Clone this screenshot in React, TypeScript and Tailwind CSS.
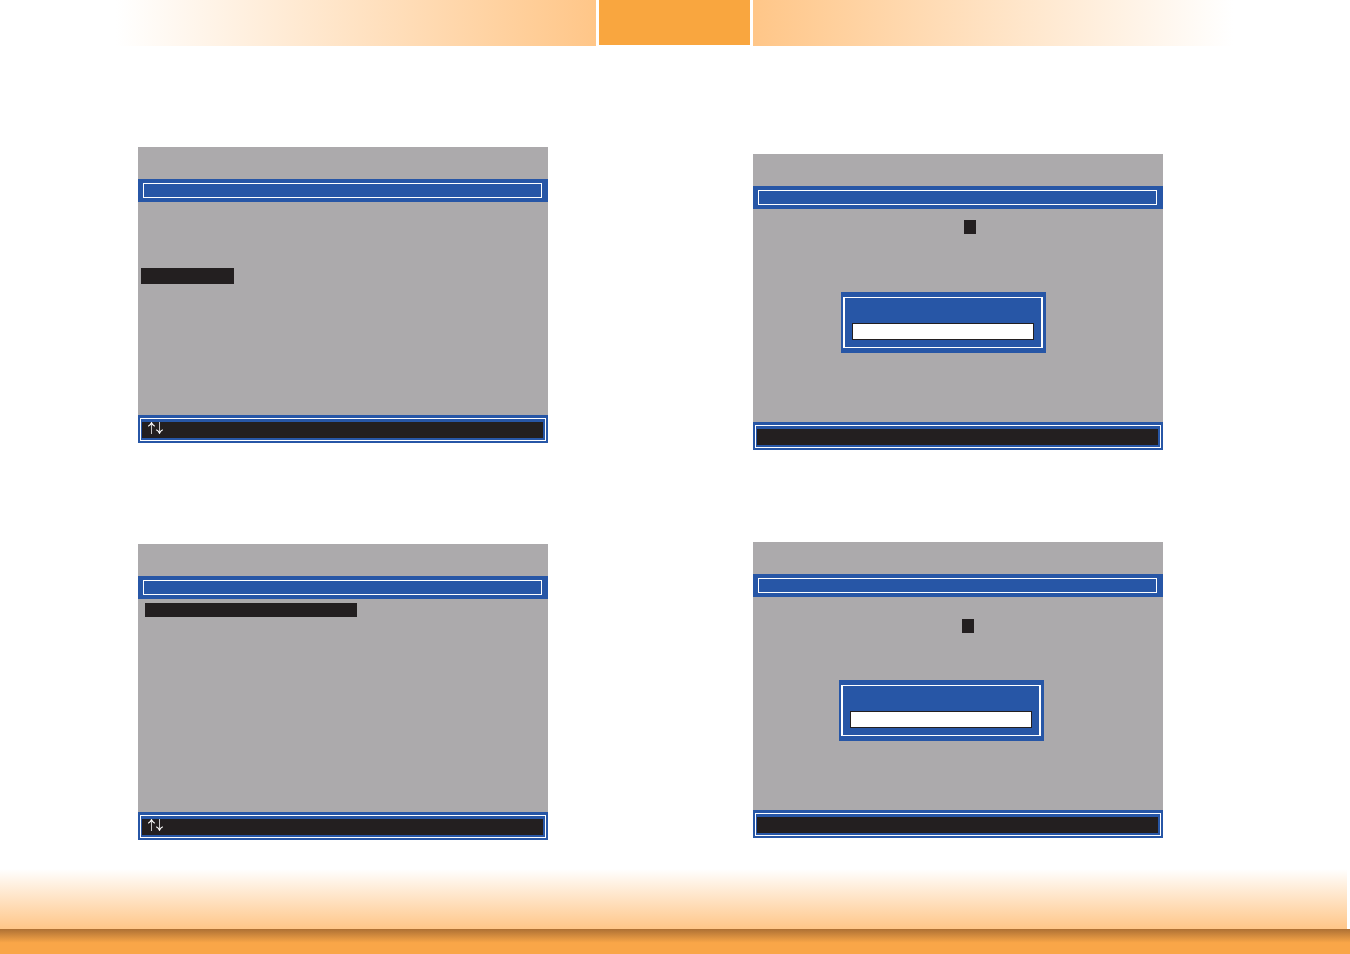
import type { ReactNode } from "react";

function ArrowKeys() {
  return (
    <svg
      aria-label="Up and down arrow keys"
      className="h-3 w-4"
      fill="none"
      role="img"
      stroke="white"
      viewBox="0 0 16 12"
    >
      <path d="M4.5 1v11M12.5 0v11" strokeWidth="1" opacity="0.75" />
      <path d="M1.2 4.2Q3.6 3.2 4.5 0.8Q5.4 3.2 7.8 4.2" strokeWidth="1.1" />
      <path d="M9.2 7.8Q11.6 8.8 12.5 11.2Q13.4 8.8 15.8 7.8" strokeWidth="1.1" />
    </svg>
  );
}

function Screen({ hint, children }: { hint?: ReactNode; children: ReactNode }) {
  return (
    <section className="bg-[#acaaac]">
      <div className="h-8" />
      <div className="bg-[#2756a6] py-1 pl-[5px] pr-1.5">
        <div className="h-[15px] border border-white" />
      </div>
      <div className="h-[213px]">{children}</div>
      <footer className="bg-[#2756a6] px-0.5 pb-0.5 pt-[3px]">
        <div className="border border-white pb-0.5 pl-px pr-0.5 pt-[3px]">
          <div className="flex h-4 items-start bg-[#231f20] pl-[5px]">{hint}</div>
        </div>
      </footer>
    </section>
  );
}

function PasswordPrompt({ label }: { label: string }) {
  return (
    <div className="w-[205px] bg-[#2756a6] py-[5px] pl-0.5 pr-[3px]">
      <div className="border-x-2 border-y border-white px-[7px] pb-[7px] pt-[25px]">
        <input
          aria-label={label}
          className="block h-[17px] w-full border border-[#231f20] bg-white px-1 text-xs text-[#231f20] outline-none"
          type="text"
        />
      </div>
    </div>
  );
}

function PageHeader() {
  return (
    <header className="flex h-[46px] gap-[3px] pl-[116px] pr-[117px]">
      <div className="flex-1 bg-linear-to-r/srgb from-white to-[#ffc688]" />
      <div className="h-[45px] w-[151px] bg-[#f9a63f]" />
      <div className="flex-1 bg-linear-to-l/srgb from-white to-[#ffc688]" />
    </header>
  );
}

function PageFooter() {
  return (
    <footer className="mt-auto">
      <div className="mr-[3px] h-[60px] bg-linear-to-t/srgb from-[#ffc688] to-white" />
      <div className="h-[25px] bg-linear-to-b/srgb from-[#ad7034] via-[#f9a648] via-55% to-[#f9a648]" />
    </footer>
  );
}

export default function App() {
  return (
    <div className="flex min-h-screen flex-col bg-white">
      <PageHeader />

      <main className="flex gap-[205px] pl-[138px] pr-[187px]">
        <div className="flex flex-1 flex-col gap-[101px] pt-[101px]">
          <Screen hint={<ArrowKeys />}>
            <div className="pl-[3px] pt-[66px]">
              <button
                aria-label="Selected menu entry"
                className="block h-4 w-[93px] bg-[#231f20]"
                type="button"
              />
            </div>
          </Screen>
          <Screen hint={<ArrowKeys />}>
            <div className="pl-[7px] pt-1">
              <button
                aria-label="Selected option"
                className="block h-3.5 w-[212px] bg-[#231f20]"
                type="button"
              />
            </div>
          </Screen>
        </div>

        <div className="flex flex-1 flex-col gap-[92px] pt-[108px]">
          <Screen>
            <div className="h-[83px] pl-[211px] pt-[11px]">
              <div className="h-3.5 w-3 bg-[#231f20]" />
            </div>
            <div className="pl-[88px]">
              <PasswordPrompt label="Enter value" />
            </div>
          </Screen>
          <Screen>
            <div className="h-[83px] pl-[209px] pt-[22px]">
              <div className="h-3.5 w-3 bg-[#231f20]" />
            </div>
            <div className="pl-[86px]">
              <PasswordPrompt label="Confirm value" />
            </div>
          </Screen>
        </div>
      </main>

      <PageFooter />
    </div>
  );
}
